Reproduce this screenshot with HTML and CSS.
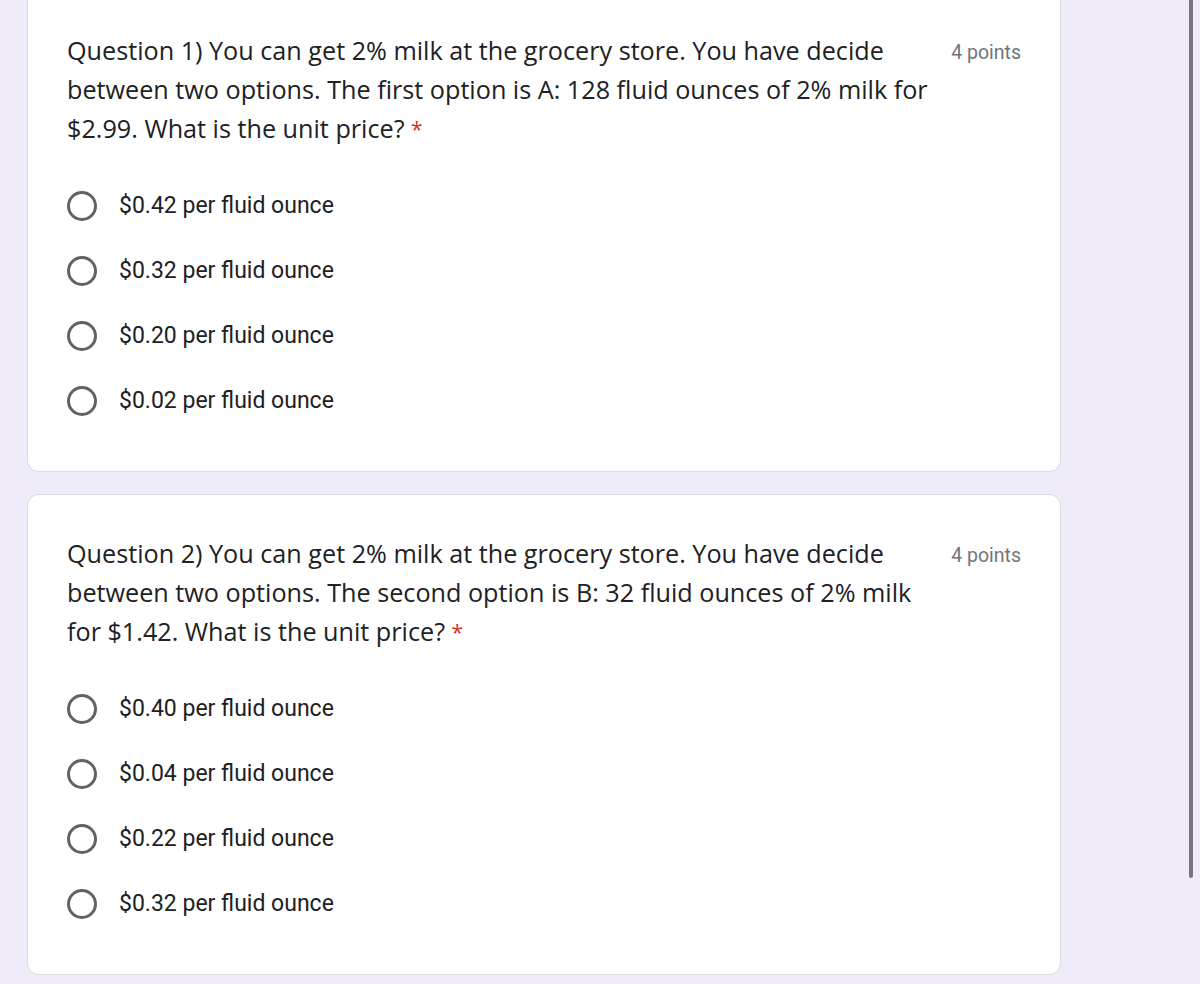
FILE: index.html
```html
<!DOCTYPE html>
<html lang="en">
<head>
<meta charset="utf-8">
<title>Quiz</title>
<link rel="stylesheet" href="styles.css">
</head>
<body>
<div class="scrollbar"></div>
<main class="form">
  <section class="card card-first">
    <div class="head">
      <div class="title">Question 1) You can get 2% milk at the grocery store. You have decide between two options. The first option is A: 128 fluid ounces of 2% milk for $2.99. What is the unit price? <span class="req">*</span></div>
      <div class="points">4 points</div>
    </div>
    <div class="options">
      <label class="opt"><span class="radio"></span><span class="opt-text">$0.42 per fluid ounce</span></label>
      <label class="opt"><span class="radio"></span><span class="opt-text">$0.32 per fluid ounce</span></label>
      <label class="opt"><span class="radio"></span><span class="opt-text">$0.20 per fluid ounce</span></label>
      <label class="opt"><span class="radio"></span><span class="opt-text">$0.02 per fluid ounce</span></label>
    </div>
  </section>
  <section class="card">
    <div class="head">
      <div class="title">Question 2) You can get 2% milk at the grocery store. You have decide between two options. The second option is B: 32 fluid ounces of 2% milk for $1.42. What is the unit price? <span class="req">*</span></div>
      <div class="points">4 points</div>
    </div>
    <div class="options">
      <label class="opt"><span class="radio"></span><span class="opt-text">$0.40 per fluid ounce</span></label>
      <label class="opt"><span class="radio"></span><span class="opt-text">$0.04 per fluid ounce</span></label>
      <label class="opt"><span class="radio"></span><span class="opt-text">$0.22 per fluid ounce</span></label>
      <label class="opt"><span class="radio"></span><span class="opt-text">$0.32 per fluid ounce</span></label>
    </div>
  </section>
</main>
</body>
</html>
```
FILE: styles.css
```css
html, body {
  margin: 0;
  padding: 0;
  background: #f0ebf8;
  height: 984px;
  overflow: hidden;
}
body {
  font-family: Roboto, "Liberation Sans", sans-serif;
  color: #202124;
  position: relative;
}
.form {
  width: 1034px;
  margin-left: 27px;
  display: flex;
  flex-direction: column;
  gap: 22px;
}
.card {
  background: #fff;
  border: 1px solid #dadce0;
  border-radius: 12px;
  padding: 39px 39px 38px 39px;
  box-sizing: border-box;
  display: flex;
  flex-direction: column;
  gap: 25px;
}
.card-first {
  margin-top: -8px;
  border-top: none;
  border-top-left-radius: 0;
  border-top-right-radius: 0;
}
.head {
  display: flex;
  align-items: flex-start;
  gap: 12px;
}
.title {
  flex: 1;
  font-family: "Open Sans", "Noto Sans", sans-serif;
  font-size: 25.2px;
  line-height: 39px;
  color: #202124;
}
.req {
  color: #d93025;
  font-size: 21px;
  line-height: 0;
  vertical-align: 1px;
}
.points {
  font-size: 19.5px;
  line-height: 22px;
  padding-top: 11px;
  color: #70757a;
  white-space: nowrap;
}
.options {
  display: flex;
  flex-direction: column;
}
.opt {
  height: 65px;
  display: flex;
  align-items: center;
  gap: 22px;
}
.radio {
  width: 30px;
  height: 30px;
  box-sizing: border-box;
  border: 3px solid #5f6368;
  border-radius: 50%;
  flex: none;
}
.opt-text {
  font-size: 23px;
  color: #202124;
}
.scrollbar {
  position: absolute;
  left: 1189px;
  top: 0;
  width: 4px;
  height: 878px;
  background: #79757f;
  border-radius: 0 0 2px 2px;
}
```
